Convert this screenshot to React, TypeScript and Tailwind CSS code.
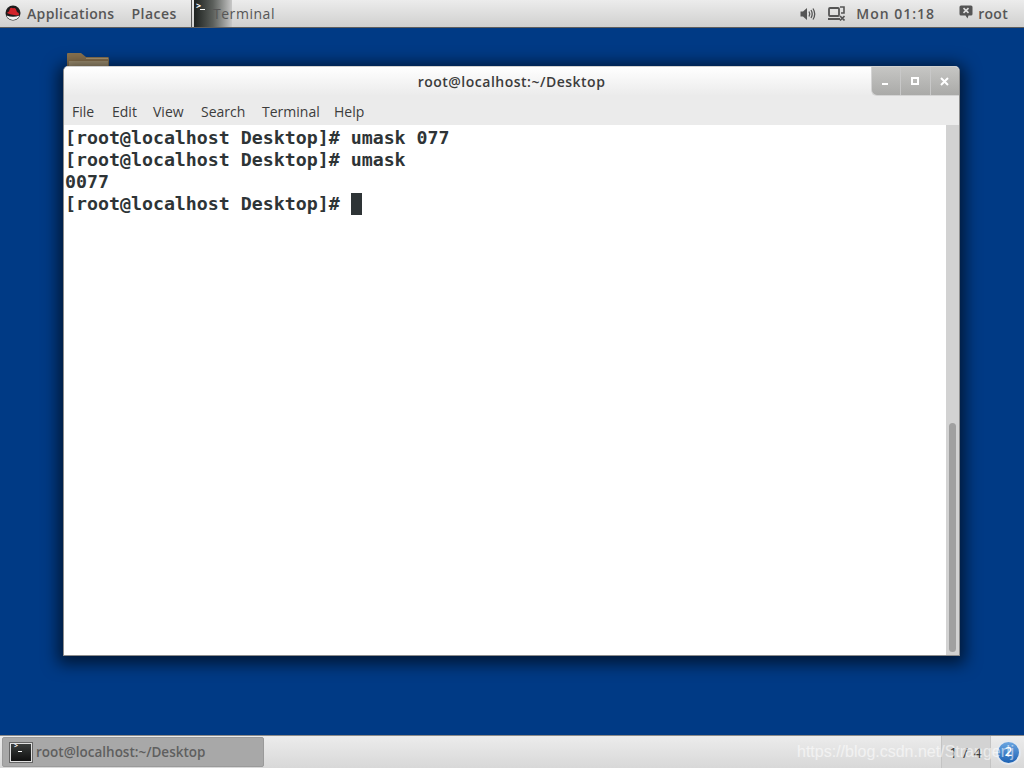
import React from 'react'

const menus = [
  { label: 'File', width: 'w-[40px]' },
  { label: 'Edit', width: 'w-[41px]' },
  { label: 'View', width: 'w-[48px]' },
  { label: 'Search', width: 'w-[61px]' },
  { label: 'Terminal', width: 'w-[72px]' },
  { label: 'Help', width: 'w-[34px]' },
]

const lines = [
  '[root@localhost Desktop]# umask 077',
  '[root@localhost Desktop]# umask',
  '0077',
]

const shellFont = { fontFamily: '"Open Sans", "Noto Sans", sans-serif' }

function RedHatLogo() {
  return (
    <svg width="16" height="16" viewBox="0 0 16 16">
      <circle cx="8" cy="8" r="7.5" fill="#1c1c1c" />
      <path d="M1.5 10.5 A7 7 0 0 0 14.5 10.5 Q8 13 1.5 10.5Z" fill="#f2f2f2" />
      <path d="M2 8 Q3 6.8 4 6.6 L5 3.4 Q6 2.4 8 3.2 Q10 2.6 10.8 4 L12 7 Q14.4 8 14 9.4 Q13 11 9 10 Q4.5 9.4 2 8Z" fill="#d2232a" />
    </svg>
  )
}

function FolderIcon() {
  return (
    <svg width="44" height="16" viewBox="0 0 44 16">
      <path d="M1 16 V2 Q1 1 2 1 H15 L20 5 H42 Q43 5 43 7 V16Z" fill="#8a7350" />
      <rect x="3" y="9" width="39" height="7" fill="#a89878" />
      <rect x="20" y="6" width="22" height="1" fill="#b09c78" />
    </svg>
  )
}

function SpeakerIcon() {
  return (
    <svg width="16" height="14" viewBox="0 0 16 14" fill="none">
      <path d="M0.5 4.5 H3 L7 1 V13 L3 9.5 H0.5Z" fill="#555" />
      <path d="M9 4.5 Q10.5 7 9 9.5" stroke="#555" strokeWidth="1.3" />
      <path d="M11 3 Q13.4 7 11 11" stroke="#555" strokeWidth="1.3" />
      <path d="M13 1.5 Q16.4 7 13 12.5" stroke="#555" strokeWidth="1.3" />
    </svg>
  )
}

function NetworkIcon() {
  return (
    <svg width="17" height="15" viewBox="0 0 17 15" fill="none">
      <rect x="1" y="2" width="10" height="8" rx="1" stroke="#555" strokeWidth="1.8" />
      <path d="M0 12 H12 V14 H0Z" fill="#555" />
      <path d="M12 1 H16 V7 H13" stroke="#555" strokeWidth="1.6" />
      <path d="M12 10 L16.5 14.5 M16.5 10 L12 14.5" stroke="#555" strokeWidth="1.6" />
    </svg>
  )
}

function ChatIcon() {
  return (
    <svg width="14" height="14" viewBox="0 0 14 14">
      <path d="M2 0.5 H12 Q13.5 0.5 13.5 2 V9 Q13.5 10.5 12 10.5 H9.5 L8.5 13.5 L6.5 10.5 H2 Q0.5 10.5 0.5 9 V2 Q0.5 0.5 2 0.5Z" fill="#555" />
      <path d="M4.5 3.2 L9.5 7.8 M9.5 3.2 L4.5 7.8" stroke="#e0e0e0" strokeWidth="1.6" />
    </svg>
  )
}

export default function App() {
  return (
    <div className="relative w-[1024px] h-[768px] overflow-hidden flex flex-col bg-[#003a85]" style={shellFont}>
      {/* top panel */}
      <div className="h-[28px] shrink-0 flex items-center bg-gradient-to-b from-[#ececec] to-[#d0d0cf] border-b border-[#5e5e5e] text-[#565656] text-[14px] font-semibold">
        <div className="ml-[5px] mt-[-2px]"><RedHatLogo /></div>
        <span className="ml-[6px] tracking-[0.35px]">Applications</span>
        <span className="ml-[17px] tracking-[0.5px]">Places</span>
        <div className="ml-[14px] w-[1px] h-[27px] bg-[#555]" />
        <div className="ml-[2px] w-[38px] h-[27px] relative bg-gradient-to-r from-[#1e2220] via-[#5c605c] to-[#c8c8c8]">
          <span className="absolute left-[2px] top-[-1px] text-white text-[9px] font-bold leading-[14px]">{'>'}</span>
          <div className="absolute left-[6px] top-[9px] w-[5px] h-[1px] bg-white" />
        </div>
        <span className="ml-[-19px] z-10 tracking-[0.55px] font-normal">Terminal</span>
        <div className="ml-auto flex items-center">
          <SpeakerIcon />
          <div className="ml-[12px]"><NetworkIcon /></div>
          <span className="ml-[11px] tracking-[1px]">Mon 01:18</span>
          <div className="ml-[24px] mt-[-3px]"><ChatIcon /></div>
          <span className="ml-[5px] mr-[16px] tracking-[0.3px]">root</span>
        </div>
      </div>

      {/* desktop */}
      <div className="relative flex-1 pl-[63px] pt-[38px]">
        <div className="absolute left-[66px] top-[24px]"><FolderIcon /></div>

        <div className="relative w-[897px] h-[590px] flex flex-col rounded-t-[5px] bg-[#ebebeb] border border-[#8d8d8d] border-t-[#d0d0d0] shadow-[0_3px_16px_5px_rgba(0,0,0,0.6)] overflow-hidden">
          <div className="relative h-[29px] shrink-0 bg-gradient-to-b from-[#ffffff] to-[#ebebeb]">
            <div className="text-center text-[14px] tracking-[0.5px] font-semibold text-[#3c3c3c] leading-[28px] mt-[1px]">root@localhost:~/Desktop</div>
            <div className="absolute right-0 top-0 w-[88px] h-[29px] flex rounded-bl-[6px] bg-gradient-to-b from-[#c6c6c4] to-[#aaaaa8] border-b border-l border-[#d4d4d4]">
              <div className="flex-1 relative border-r border-[#c8c8c8]">
                <div className="absolute left-[10px] top-[16px] w-[6px] h-[2px] bg-white" />
              </div>
              <div className="flex-1 relative border-r border-[#c8c8c8]">
                <div className="absolute left-[10px] top-[10px] w-[8px] h-[8px] border-2 border-white" />
              </div>
              <div className="flex-1 flex items-start justify-center text-white">
                <svg className="mt-[10px]" width="9" height="9" viewBox="0 0 9 9"><path d="M1 1 L8 8 M8 1 L1 8" stroke="white" strokeWidth="2" /></svg>
              </div>
            </div>
          </div>

          <div className="h-[29px] shrink-0 flex items-center pl-[8px] pt-[2px] text-[14px] text-[#3c3c3c] bg-[#ebebeb]">
            {menus.map(m => (
              <span key={m.label} className={m.width}>{m.label}</span>
            ))}
          </div>

          <div className="flex-1 flex bg-white min-h-0">
            <div className="flex-1 pl-[1px] pt-[2px] font-bold text-[18.25px] leading-[22px] text-[#2e3436] whitespace-pre" style={{ fontFamily: '"DejaVu Sans Mono", monospace' }}>
              {lines.map((l, i) => (
                <div key={i} className="h-[22px]">{l}</div>
              ))}
              <div className="h-[22px] flex items-center">
                <span>{'[root@localhost Desktop]# '}</span>
                <span className="w-[11px] h-[22px] bg-[#2e3436]" />
              </div>
            </div>
            <div className="w-[13px] flex flex-col justify-end bg-[#d2d2d2] pb-[3px] items-center">
              <div className="w-[7px] h-[229px] rounded-full bg-[#a0a0a0]" />
            </div>
          </div>
        </div>
      </div>

      {/* bottom panel */}
      <div className="h-[33px] shrink-0 flex items-center bg-gradient-to-b from-[#ececec] to-[#d8d8d8] border-t border-[#8a8a8a] text-[13.5px] font-semibold text-[#5f5f5f]">
        <div className="ml-[2px] w-[262px] h-[30px] flex items-center rounded-[2px] bg-[#a8a8a8] border border-[#9a9a9a]">
          <div className="ml-[7px] w-[22px] h-[19px] relative bg-gradient-to-b from-[#3a3d3c] to-[#111] border border-[#e0e0e0] outline outline-[#666]">
            <span className="absolute left-[3px] top-[-3px] text-white text-[7px] font-bold">{'>'}</span>
            <div className="absolute left-[7px] top-[7px] w-[4px] h-[1px] bg-white" />
          </div>
          <span className="ml-[4px]">root@localhost:~/Desktop</span>
        </div>
        <div className="ml-auto w-[50px] h-[32px] flex items-center justify-center bg-[#d3d3d3] border-x border-[#c4c4c4] text-[#3a3a3a] font-normal tracking-[1px] text-[14px]">
          1 / 4
        </div>
        <div className="ml-[5px] mr-[3px] w-[25px] h-[25px] flex items-center justify-center rounded-full bg-gradient-to-b from-[#6aa5e0] to-[#1c62b4] border-2 border-[#e4e8ee] text-white text-[13px]">
          2
        </div>
      </div>

      {/* csdn watermark */}
      <div className="absolute left-[797px] top-[740px] text-[16px] text-white/55 whitespace-nowrap" style={{ fontFamily: '"Liberation Sans", sans-serif' }}>
        https://blog.csdn.net/StrangerIj
      </div>
    </div>
  )
}
